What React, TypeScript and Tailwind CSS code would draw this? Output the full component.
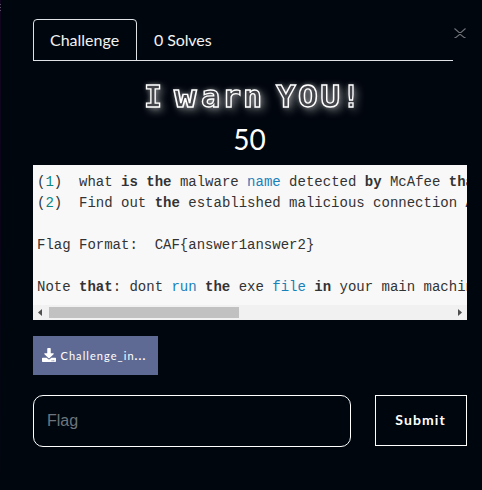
import React from "react";

const K = ({ children }: { children: React.ReactNode }) => <b className="font-bold">{children}</b>;
const B = ({ children }: { children: React.ReactNode }) => <span className="text-[#1a80b8]">{children}</span>;
const N = ({ children }: { children: React.ReactNode }) => <span className="text-[#0b8583]">{children}</span>;

export default function App() {
  return (
    <div className="relative h-[490px] w-[482px] overflow-hidden bg-[#00060e] pl-[33px] pr-[15px] pt-[19px] font-[Lato,sans-serif] text-white">
      <div className="absolute left-0 top-0 h-full w-px bg-gradient-to-b from-[#12051f] via-[#0b0418] to-[#00060e]" />
      <div className="absolute left-0 top-[4px] flex flex-col gap-[2px]">
        <i className="h-px w-px bg-[#55505e]" />
        <i className="h-px w-px bg-[#55505e]" />
        <i className="h-px w-px bg-[#55505e]" />
      </div>
      <svg className="absolute left-[454px] top-[28px]" width="12" height="11" viewBox="0 0 12 11" fill="none" stroke="#707277" strokeWidth="1.1">
        <path d="M.5.5 5 4.5h2L11.5.5M.5 9.5h1.4L5.5 6.5h1l3.6 3h1.4" />
      </svg>

      <div className="flex h-[42px] w-[420px] border-b border-[#dee2e6] text-[16px] leading-[24px] text-[#f2f2f2]">
        <div className="-mb-px h-[42px] w-[104px] rounded-t-[4px] border border-[#dee2e6] pl-[16px] pt-[8px]">Challenge</div>
        <div className="pl-[17px] pt-[9px] tracking-[-0.1px]">0 Solves</div>
      </div>

      <h3 className="mt-[16px] flex h-[40px] whitespace-pre pl-[111px] font-['DejaVu_Sans_Mono',monospace] text-[30px] font-bold leading-[40px] tracking-[1.8px] text-[#44464b] will-change-transform [-webkit-text-stroke:1.3px_#fff] [text-shadow:0_0_5px_#ffffff70,3px_3px_9px_#ffffff90]">
        <span className="w-[30px]">I</span>
        <span className="flex w-[102px]">
          <span className="w-[27px] origin-left scale-x-[1.25]">w</span>
          <span className="w-[75px] origin-left scale-x-[1.06]">arn</span>
        </span>
        <span className="w-[68px] origin-left scale-x-[1.1] tracking-[2px]">YOU</span>
        <span className="-ml-[2px] w-[20px]">!</span>
      </h3>

      <div className="mt-[4px] h-[36px] w-[433px] text-center text-[28px] leading-[36px]">50</div>

      <div className="mt-[8px] h-[155px] w-[434px] overflow-hidden bg-[#f8f8f8] text-[#333]">
        <pre className="h-[140px] overflow-hidden pl-[4px] pt-[7px] font-['Liberation_Mono',monospace] text-[14px] leading-[21px]">
          <div>(<N>1</N>){"  "}what <K>is</K> <K>the</K> malware <B>name</B> detected <K>by</K> McAfee <K>that</K></div>
          <div>(<N>2</N>){"  "}Find out <K>the</K> established malicious connection Address</div>
          <div>{" "}</div>
          <div>Flag Format:{"  "}CAF{"{answer1answer2}"}</div>
          <div>{" "}</div>
          <div>Note <K>that</K>: dont <B>run</B> <K>the</K> exe <B>file</B> <K>in</K> your main machine</div>
        </pre>
        <div className="flex h-[15px] items-center justify-between bg-[#f1f1f1] px-[5px]">
          <div className="flex items-center gap-[7px]">
            <svg width="4" height="7" viewBox="0 0 4 7"><path d="M4 0v7L0 3.5z" fill="#505050" /></svg>
            <div className="h-[11px] w-[190px] bg-[#c1c1c1]" />
          </div>
          <svg width="4" height="7" viewBox="0 0 4 7"><path d="M0 0v7l4-3.5z" fill="#505050" /></svg>
        </div>
      </div>

      <button className="mt-[16px] flex h-[39px] w-[125px] items-center bg-[#5f6a94] pl-[9px] text-[11px] tracking-[1.06px]">
        <svg className="mr-[4.5px] mt-[-2px]" width="14" height="14" viewBox="0 0 512 512" fill="white">
          <path d="M216 0h80c13 0 24 11 24 24v168h88c18 0 27 21 14 34L270 378c-8 8-20 8-28 0L90 226c-13-13-4-34 14-34h88V24c0-13 11-24 24-24zm296 376v112c0 13-11 24-24 24H24c-13 0-24-11-24-24V376c0-13 11-24 24-24h147l49 49c20 20 52 20 72 0l49-49h147c13 0 24 11 24 24zM388 464a20 20 0 1 0-40 0 20 20 0 0 0 40 0zm64 0a20 20 0 1 0-40 0 20 20 0 0 0 40 0z" />
        </svg>
        <span className="pt-px">Challenge_in<b className="text-[12px]">...</b></span>
      </button>

      <div className="mt-[20px] flex w-[434px] items-start justify-between">
        <input className="h-[52px] w-[318px] rounded-[10px] border border-white bg-transparent px-[13px] font-['Liberation_Sans',sans-serif] text-[16px] placeholder:text-[#6c757d]" placeholder="Flag" />
        <button className="h-[51px] w-[92px] border border-white pb-[3px] pr-px text-[14px] font-bold tracking-[1.1px]">Submit</button>
      </div>
    </div>
  );
}
